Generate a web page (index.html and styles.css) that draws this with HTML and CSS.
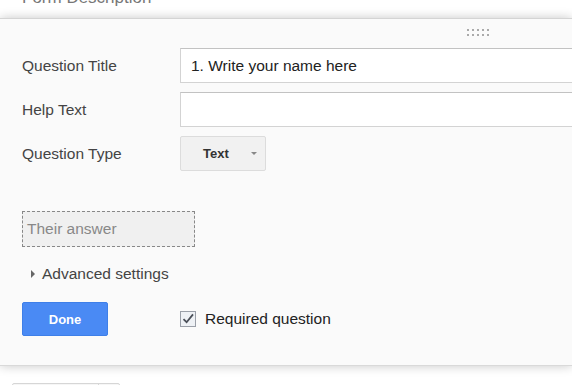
FILE: index.html
```html
<!DOCTYPE html>
<html lang="en">
<head>
    <meta charset="UTF-8">
    <title>Edit question</title>
    <link rel="stylesheet" href="styles.css">
</head>
<body>
    <div class="form-desc">Form Description</div>

    <div class="editor">
        <div class="drag-handle">
            <span></span><span></span><span></span><span></span><span></span>
            <span></span><span></span><span></span><span></span><span></span>
        </div>

        <div class="fields">
            <label class="field-label">Question Title</label>
            <input class="text-input" type="text" value="1. Write your name here">

            <label class="field-label">Help Text</label>
            <input class="text-input" type="text" value="">

            <label class="field-label">Question Type</label>
            <div>
                <button class="type-select">Text <span class="caret"></span></button>
            </div>
        </div>

        <div class="answer-preview">Their answer</div>

        <div class="advanced">
            <span class="tri"></span>Advanced settings
        </div>

        <div class="actions">
            <button class="done-btn">Done</button>
            <label class="required">
                <svg class="check" width="16" height="16" viewBox="0 0 16 16">
                    <rect x="0.5" y="0.5" width="15" height="15" fill="#eef1f5" stroke="#9a9fa8"/>
                    <path d="M3.5 8.2 L6.6 11.2 L13 3.4" fill="none" stroke="#4a4f58" stroke-width="1.8"/>
                </svg>
                Required question
            </label>
        </div>
    </div>

    <div class="below">
        <div class="split-btn"><span class="main"></span><span class="side"></span></div>
    </div>
</body>
</html>
```

FILE: styles.css
```css
* {
    margin: 0;
    padding: 0;
    box-sizing: border-box;
}

html, body {
    height: 100%;
    overflow: hidden;
}

body {
    font-family: "Liberation Sans", Arial, sans-serif;
    background-color: #ffffff;
    color: #333;
}

/* header text of the form, mostly scrolled out of view */
.form-desc {
    margin-top: -12px;
    height: 20px;
    padding-left: 22px;
    font-size: 17px;
    line-height: 20px;
    color: #777;
}

.editor {
    margin-top: 10px;
    background-color: #fafafa;
    border-top: 1px solid #d4d4d4;
    border-bottom: 1px solid #d9d9d9;
    box-shadow: 0 0 10px rgba(0,0,0,0.22);
    padding: 10px 0 26px 22px;
    height: 348px;
}

.drag-handle {
    margin-left: 445px;
    width: 24px;
    display: grid;
    grid-template-columns: repeat(5, 2px);
    gap: 3px 3px;
    height: 7px;
}

.drag-handle span {
    width: 2px;
    height: 2px;
    background: #aaa;
}

.fields {
    margin-top: 12px;
    display: grid;
    grid-template-columns: 158px 1fr;
    grid-auto-rows: 35px;
    row-gap: 9px;
    align-items: center;
}

.field-label {
    font-size: 15.5px;
    color: #444;
}

.text-input {
    width: 420px;
    height: 35px;
    border: 1px solid #d3d3d3;
    border-top-color: #c2c2c2;
    background: #fff;
    font-family: inherit;
    font-size: 15.5px;
    color: #222;
    padding: 0 10px;
    outline: none;
}

.type-select {
    width: 86px;
    height: 35px;
    border: 1px solid #dcdcdc;
    border-radius: 2px;
    background: #f1f1f1;
    font-family: inherit;
    font-size: 13px;
    font-weight: bold;
    color: #333;
    text-align: left;
    display: flex;
    align-items: center;
    justify-content: space-between;
    padding: 0 8px 0 22px;
}

.caret {
    width: 0;
    height: 0;
    border-left: 3px solid transparent;
    border-right: 3px solid transparent;
    border-top: 3px solid #888;
}

.answer-preview {
    margin-top: 40px;
    width: 173px;
    height: 36px;
    border: 1px dashed #888;
    background: #f0f0f0;
    font-size: 15.5px;
    color: #888;
    padding-left: 4px;
    line-height: 34px;
}

.advanced {
    margin-top: 17px;
    padding-left: 9px;
    font-size: 15.5px;
    color: #444;
    display: flex;
    align-items: center;
    height: 20px;
}

.tri {
    width: 0;
    height: 0;
    border-top: 4px solid transparent;
    border-bottom: 4px solid transparent;
    border-left: 4px solid #666;
    margin-right: 7px;
}

.actions {
    margin-top: 18px;
    display: flex;
    align-items: center;
}

.done-btn {
    width: 86px;
    height: 34px;
    border: 1px solid #3e7fe8;
    border-radius: 2px;
    background: #4a8af4;
    color: #fff;
    font-family: inherit;
    font-size: 13px;
    font-weight: bold;
}

.required {
    margin-left: 72px;
    display: flex;
    align-items: center;
    gap: 9px;
    font-size: 15.5px;
    color: #222;
}

.check {
    display: block;
}

.below {
    margin-top: 17px;
    padding-left: 12px;
}

.split-btn {
    display: flex;
    width: 108px;
    height: 30px;
    border: 1px solid #d6d6d6;
    border-radius: 2px;
    background: #f6f6f6;
}

.split-btn .main {
    width: 86px;
    border-right: 1px solid #d6d6d6;
}
```
